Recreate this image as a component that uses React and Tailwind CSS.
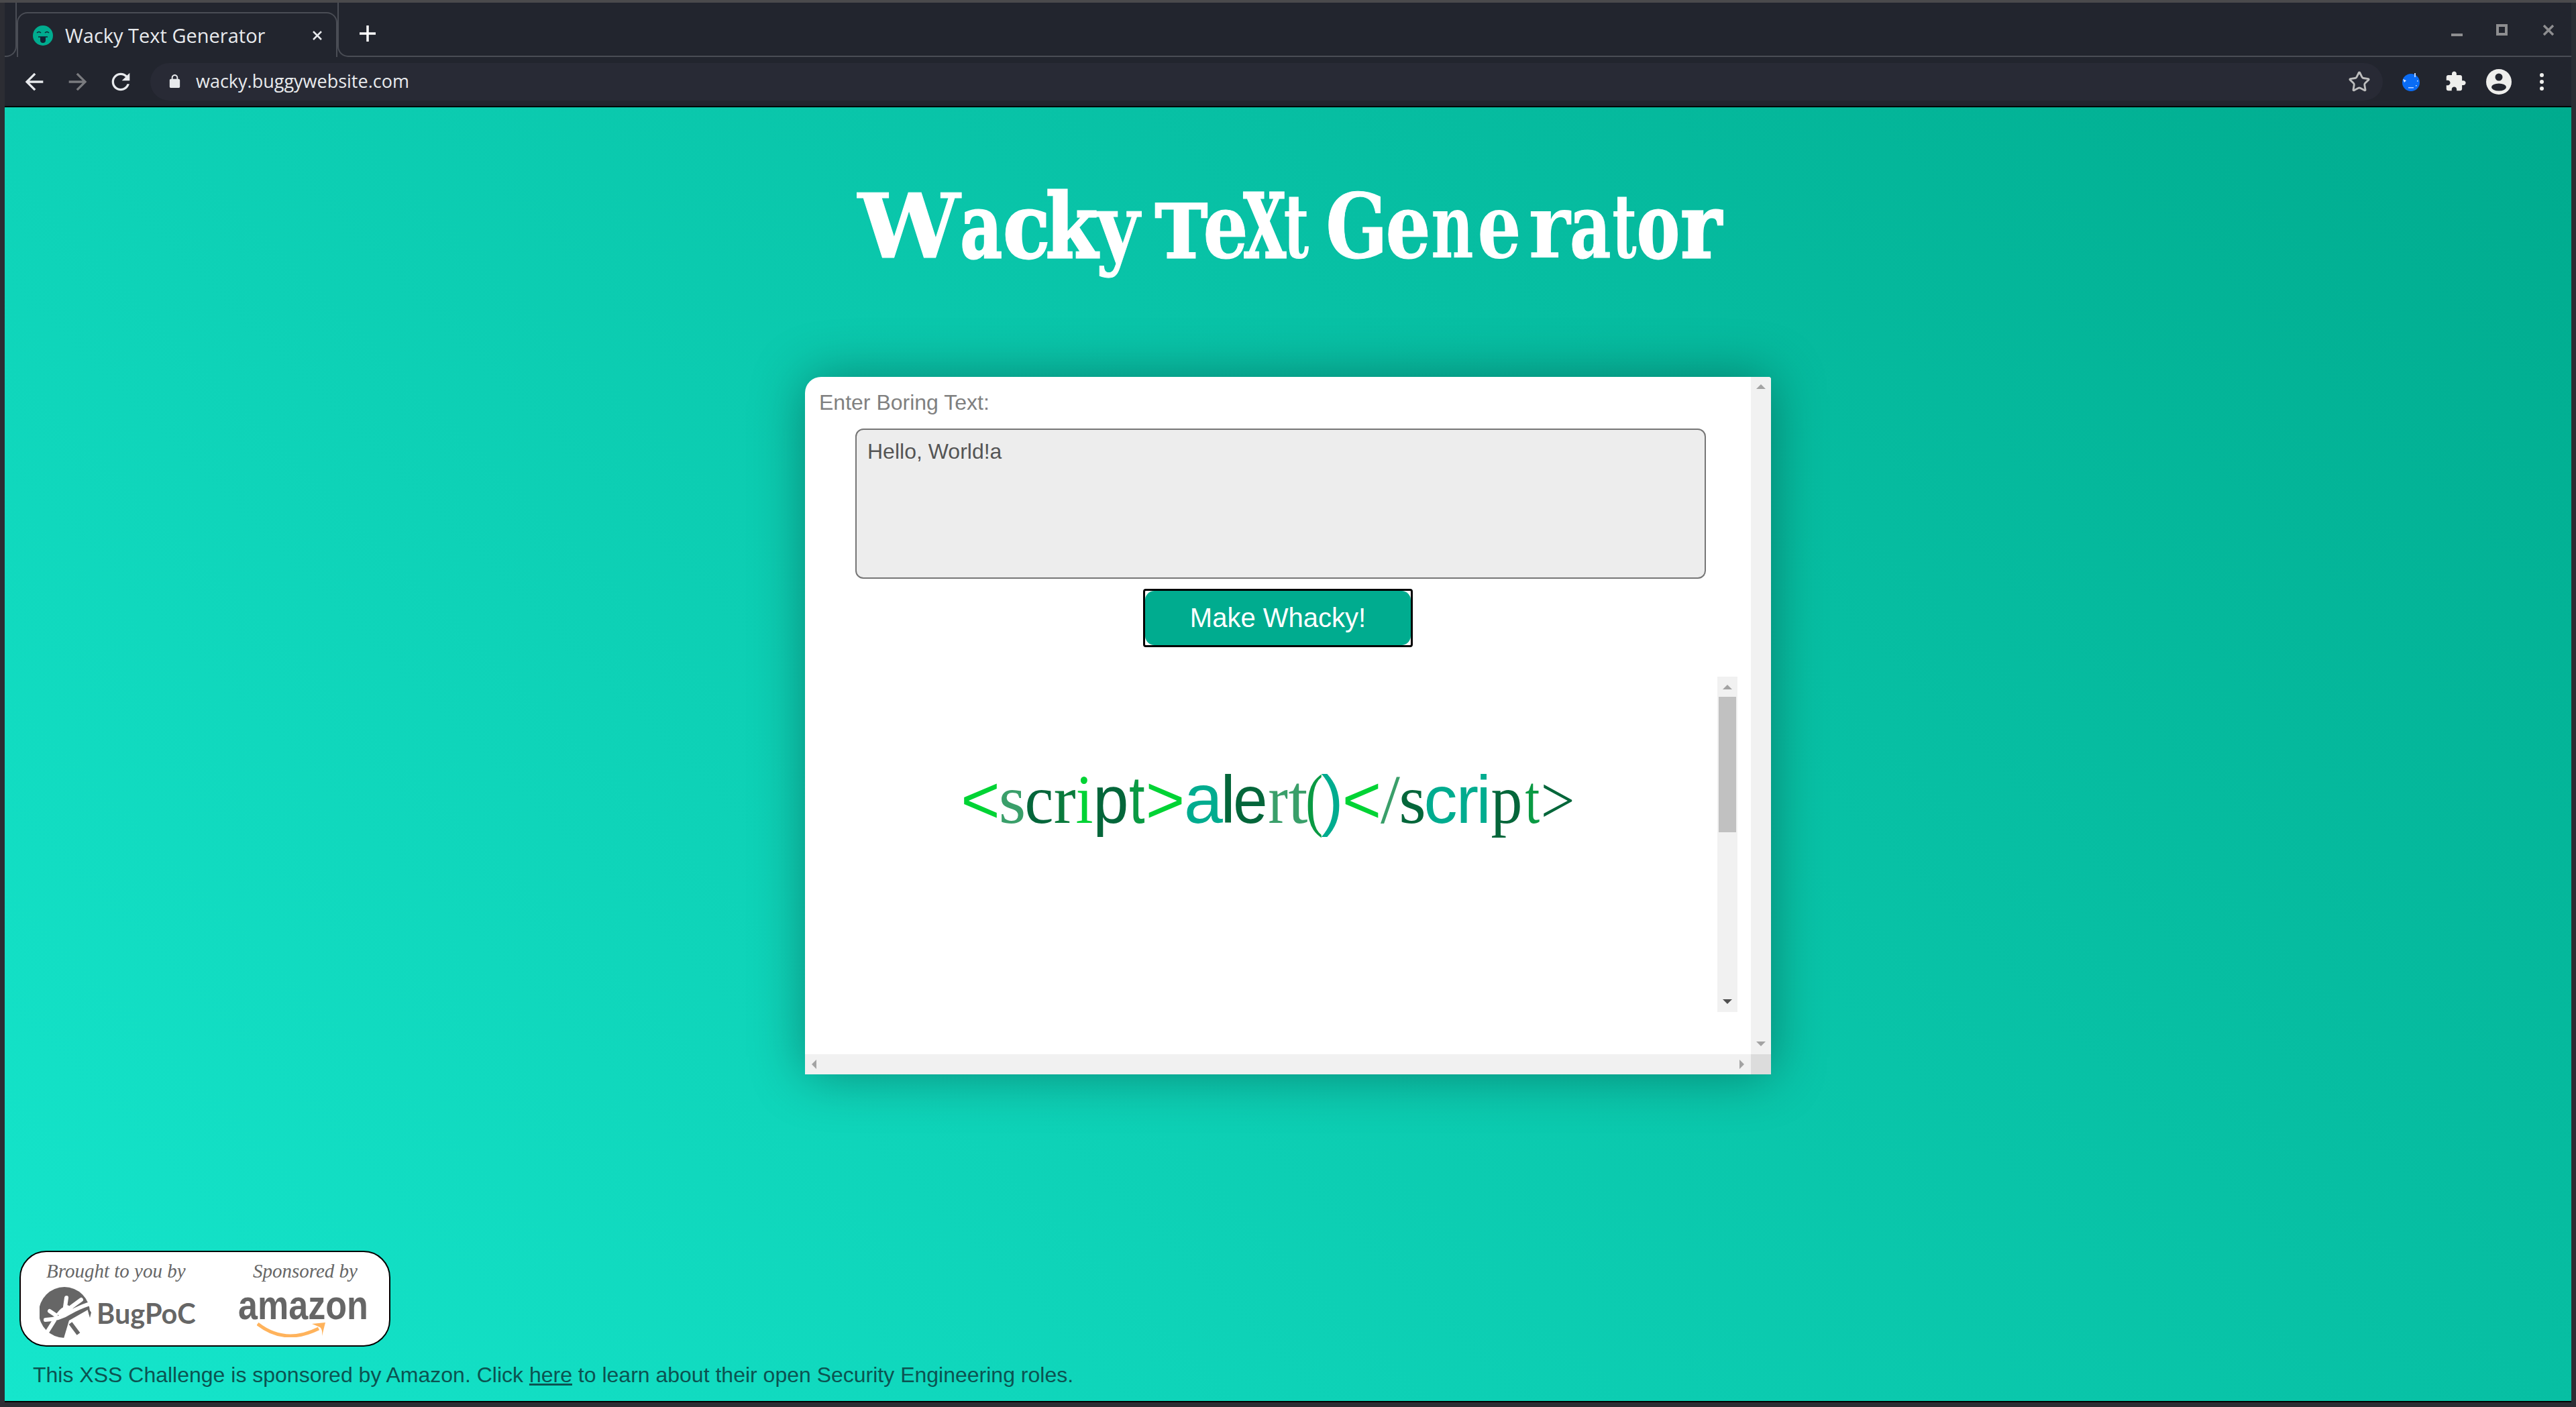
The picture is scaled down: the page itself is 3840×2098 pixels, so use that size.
import { Star } from "lucide-react";

const HEAVY = "[-webkit-text-stroke:3px_white]";
const MEDIUM = "[-webkit-text-stroke:1px_white]";

const TITLE = [
  { ch: "W", slot: "w-[152px]", cls: `text-[132px] scale-x-[1.03] ${MEDIUM}` },
  { ch: "a", slot: "ml-[4px] w-[56px]", cls: `text-[132px] scale-x-[0.73] ${HEAVY}` },
  { ch: "c", slot: "ml-[9px] w-[61px]", cls: `text-[132px] scale-x-[0.87] ${HEAVY}` },
  { ch: "k", slot: "w-[74px]", cls: `text-[132px] scale-x-[0.85] ${HEAVY}` },
  { ch: "y", slot: "ml-[-3px] w-[69px]", cls: `text-[132px] scale-x-[0.85] ${MEDIUM}` },
  { ch: "T", slot: "ml-[26px] w-[68px]", cls: `text-[110px] scale-x-[0.95] ${HEAVY}` },
  { ch: "e", slot: "ml-[2px] w-[59px]", cls: `text-[132px] scale-x-[0.8] ${MEDIUM}` },
  { ch: "X", slot: "w-[59px]", cls: `text-[132px] scale-x-[0.62] ${HEAVY}` },
  { ch: "t", slot: "w-[34px]", cls: "text-[132px] scale-x-[0.62]" },
  { ch: "G", slot: "ml-[32px] w-[83px]", cls: `text-[132px] scale-x-[0.82] ${MEDIUM}` },
  { ch: "e", slot: "ml-[4px] w-[61px]", cls: `text-[132px] scale-x-[0.8] ${MEDIUM}` },
  { ch: "n", slot: "ml-[7px] w-[58px]", cls: "text-[132px] scale-x-[0.66]" },
  { ch: "e", slot: "ml-[11px] w-[60px]", cls: "text-[132px] scale-x-[0.78]" },
  { ch: "r", slot: "ml-[18px] w-[54px]", cls: "text-[132px] scale-x-[0.9]" },
  { ch: "a", slot: "ml-[6px] w-[55px]", cls: `text-[132px] scale-x-[0.72] ${MEDIUM}` },
  { ch: "t", slot: "ml-[6px] w-[35px]", cls: "text-[132px] scale-x-[0.6]" },
  { ch: "o", slot: "w-[66px]", cls: `text-[132px] scale-x-[0.72] ${HEAVY}` },
  { ch: "r", slot: "w-[62px]", cls: `text-[132px] scale-x-[0.88] ${HEAVY}` },
];

const SERIF = "font-['Liberation_Serif',serif]";
const SANS = "font-['Liberation_Sans',sans-serif]";

const WACKY = [
  { ch: "<", slot: "w-[58px]", cls: `${SANS} text-[100px] text-[#00d334]` },
  { ch: "s", slot: "w-[37px]", cls: `${SERIF} text-[104px] text-[#3a9f6a]` },
  { ch: "c", slot: "w-[43px]", cls: `${SERIF} text-[104px] scale-x-[0.93] text-[#04663a]` },
  { ch: "r", slot: "w-[33px]", cls: `${SERIF} text-[104px] scale-x-[0.95] text-[#0a7a3c]` },
  { ch: "i", slot: "w-[26px]", cls: `${SERIF} text-[104px] scale-x-[0.9] text-[#00d334]` },
  { ch: "p", slot: "w-[52px]", cls: `${SANS} text-[100px] scale-x-[0.95] text-[#04663a]` },
  { ch: "t", slot: "w-[27px]", cls: `${SANS} text-[100px] scale-x-[0.85] text-[#0a9a43]` },
  { ch: ">", slot: "w-[57px]", cls: `${SANS} text-[100px] text-[#00d334]` },
  { ch: "a", slot: "w-[57px]", cls: `${SANS} text-[104px] text-[#00ac8f]` },
  { ch: "l", slot: "w-[16px]", cls: `${SANS} text-[100px] text-[#04663a]` },
  { ch: "e", slot: "w-[51px]", cls: `${SANS} text-[100px] scale-x-[0.92] text-[#04663a]` },
  { ch: "r", slot: "w-[31px]", cls: `${SERIF} text-[104px] scale-x-[0.85] text-[#3a9f6a]` },
  { ch: "t", slot: "w-[29px]", cls: `${SERIF} text-[104px] text-[#3a9f6a]` },
  { ch: "(", slot: "w-[20px]", cls: `${SERIF} text-[104px] scale-x-[0.75] text-[#0a9a43]` },
  { ch: ")", slot: "w-[33px]", cls: `${SANS} text-[100px] text-[#00ac8f]` },
  { ch: "<", slot: "w-[55px]", cls: `${SANS} text-[100px] text-[#00d334]` },
  { ch: "/", slot: "w-[30px]", cls: `${SERIF} text-[104px] text-[#3a9f6a]` },
  { ch: "s", slot: "w-[36px]", cls: `${SERIF} text-[104px] text-[#04663a]` },
  { ch: "c", slot: "w-[48px]", cls: `${SANS} text-[100px] text-[#00ac8f]` },
  { ch: "r", slot: "w-[32px]", cls: `${SANS} text-[100px] text-[#00ac8f]` },
  { ch: "i", slot: "w-[16px]", cls: `${SANS} text-[100px] text-[#00ac8f]` },
  { ch: "p", slot: "w-[52px]", cls: `${SERIF} text-[104px] scale-x-[0.9] text-[#04663a]` },
  { ch: "t", slot: "w-[26px]", cls: `${SERIF} text-[104px] scale-x-[0.75] text-[#0a9a43]` },
  { ch: ">", slot: "w-[49px]", cls: `${SERIF} text-[100px] scale-x-[0.9] text-[#04663a]` },
];

// chrome toolbar icons
const Icon = ({ d, size, color }) => (
  <svg width={size} height={size} viewBox="0 0 24 24" fill={color}>
    <path d={d} />
  </svg>
);

const Arrow = ({ dir, color = "#a3a3a3" }) => {
  const points = {
    up: "0,7 7,0 14,7",
    down: "0,0 14,0 7,7",
    left: "7,0 7,14 0,7",
    right: "0,0 7,7 0,14",
  };
  const vertical = dir === "up" || dir === "down";
  return (
    <svg width={vertical ? 14 : 7} height={vertical ? 7 : 14} fill={color}>
      <polygon points={points[dir]} />
    </svg>
  );
};

const Favicon = () => (
  <svg width="30" height="30" viewBox="0 0 30 30">
    <circle cx="15" cy="15" r="15" fill="#00ac8f" />
    <path d="M6 11q3-3 6 0M18 11q3-3 6 0" stroke="#123" strokeWidth="1.5" fill="none" />
    <path d="M8 17h14" stroke="#123" strokeWidth="1.5" />
    <path d="M11 17h8v5a4 4 0 0 1-8 0z" fill="#123" />
  </svg>
);

const Profile = () => (
  <svg width="38" height="38" viewBox="0 0 38 38">
    <circle cx="19" cy="19" r="19" fill="#eeeeec" />
    <circle cx="19" cy="12" r="5.5" fill="#22252e" />
    <ellipse cx="19" cy="27" rx="11" ry="5.5" fill="#22252e" />
  </svg>
);

const BlueExt = () => (
  <svg width="28" height="28" viewBox="0 0 28 28">
    <circle cx="14" cy="15" r="13" fill="#0a6cf5" />
    <path d="M2 10l5 2-3 3z" fill="#dbe8ff" />
    <path d="M19 1h2v6h-2zM10 22h8v1.500h-8z" fill="#b8d2ff" />
    <path d="M23 12h1.500v1.500H23zM21 19h1.500v1.500H21z" fill="#dbe8ff" />
  </svg>
);

const BugLogo = () => (
  <svg className="shrink-0" width="78" height="78" viewBox="0 0 78 78">
    <circle cx="37" cy="38" r="38" fill="#666666" />
    <path d="M35 80L44 50L72 34L75 46L82 80z" fill="#ffffff" />
    <path d="M75 46L70 28L77 38z" fill="#666666" />
    <path d="M9 49Q30 48 45 38Q60 30 72 26" stroke="#ffffff" strokeWidth="6" fill="none" strokeLinecap="round" />
    <path d="M25 40Q32 30 42 27L50 32L34 46z" fill="#ffffff" />
    <path d="M38 30L40 16M47 30L62 19M24 42L15 36M22 50L12 66" stroke="#ffffff" strokeWidth="6" fill="none" strokeLinecap="round" />
    <path d="M46 54L58 70" stroke="#666666" strokeWidth="6" />
  </svg>
);

const Smile = () => (
  <svg width="104" height="24" viewBox="0 0 104 24" fill="none">
    <path d="M1 4Q42 36 92 11" stroke="#ffb35c" strokeWidth="5" />
    <path d="M82 4L102 2L97 22Q98 12 94 9z" fill="#ffb35c" />
  </svg>
);

export default function App() {
  return (
    <div className="w-[3840px] h-[2098px] flex flex-col bg-[#2c2d33] border-t-4 border-[#4a4a4c] px-[7px] pb-[7px] font-['Liberation_Sans',sans-serif] overflow-hidden">
      {/* tabs */}
      <div className="h-[81px] flex shrink-0 bg-[#22252e] font-['Open_Sans',sans-serif]">
        <div className="w-[18px] border-b-2 border-r-2 border-[#4a4d55] rounded-br-[16px]" />
        <div className="w-[478px] mt-[14px] rounded-t-[16px] border-2 border-b-0 border-[#4a4d55] flex items-center pl-[22px]">
          <Favicon />
          <span className="ml-[18px] text-[29px] text-[#e8eaed] whitespace-nowrap">Wacky Text Generator</span>
          <svg className="ml-auto mr-[20px]" width="16" height="16" viewBox="0 0 16 16" stroke="#e8eaed" strokeWidth="2.5">
            <path d="M2 2L14 14M14 2L2 14" />
          </svg>
        </div>
        <div className="flex-1 flex items-center border-b-2 border-l-2 border-[#4a4d55] rounded-bl-[16px] pb-[2px]">
          <svg className="ml-[31px] mt-[15px]" width="24" height="24" viewBox="0 0 24 24" stroke="#ffffff" strokeWidth="3.5">
            <path d="M12 0V24M0 12H24" />
          </svg>
          <div className="ml-auto mt-[4px] flex items-center">
            <svg className="mt-[2px]" width="18" height="18" fill="#8e8e90"><rect x="1" y="13" width="17" height="4" /></svg>
            <svg className="ml-[50px]" width="18" height="18" fill="none" stroke="#8e8e90" strokeWidth="4"><rect x="2" y="2" width="13" height="13" /></svg>
            <svg className="ml-[51px] mr-[25px]" width="18" height="18" stroke="#8e8e90" strokeWidth="3.5"><path d="M2 2L16 16M16 2L2 16" /></svg>
          </div>
        </div>
      </div>

      {/* toolbar */}
      <div className="h-[73px] flex items-center shrink-0 bg-[#22252e] pl-[24px] font-['Open_Sans',sans-serif]">
        <Icon size={40} color="#e8eaed" d="M20 11H7.830l5.590-5.590L12 4l-8 8 8 8 1.410-1.410L7.830 13H20v-2z" />
        <div className="ml-[25px]">
          <Icon size={40} color="#7a7b7f" d="M12 4l-1.410 1.410L16.170 11H4v2h12.170l-5.580 5.590L12 20l8-8z" />
        </div>
        <div className="ml-[24px]">
          <Icon size={40} color="#e8eaed" d="M17.650 6.350C16.200 4.900 14.210 4 12 4c-4.420 0-7.990 3.580-7.990 8s3.570 8 7.990 8c3.730 0 6.840-2.550 7.730-6h-2.080c-.82 2.330-3.040 4-5.650 4-3.310 0-6-2.690-6-6s2.690-6 6-6c1.660 0 3.140.69 4.220 1.780L13 11h7V4l-2.350 2.350z" />
        </div>
        <div className="ml-[24px] w-[3328px] h-[56px] rounded-full bg-[#282a35] flex items-center pl-[25px] pr-[18px]">
          <Icon size={23} color="#e8eaed" d="M18 8h-1V6c0-2.760-2.240-5-5-5S7 3.240 7 6v2H6c-1.100 0-2 .9-2 2v10c0 1.100.9 2 2 2h12c1.100 0 2-.9 2-2V10c0-1.100-.9-2-2-2zM9 6c0-1.660 1.340-3 3-3s3 1.340 3 3v2H9V6z" />
          <span className="ml-[20px] text-[27px] text-[#e8eaed]">wacky.buggywebsite.com</span>
          <Star className="ml-auto" size={34} color="#bdbdbd" strokeWidth={2} />
        </div>
        <div className="ml-[28px]"><BlueExt /></div>
        <div className="ml-[36px]">
          <Icon size={33} color="#eeeeec" d="M20.500 11H19V7c0-1.100-.9-2-2-2h-4V3.500C13 2.120 11.880 1 10.500 1S8 2.120 8 3.500V5H4c-1.100 0-1.990.9-1.990 2v3.800H3.500c1.490 0 2.700 1.210 2.700 2.700s-1.210 2.700-2.700 2.700H2V20c0 1.100.9 2 2 2h3.800v-1.500c0-1.490 1.210-2.700 2.700-2.700 1.490 0 2.700 1.210 2.700 2.700V22H17c1.100 0 2-.9 2-2v-4h1.500c1.380 0 2.500-1.120 2.500-2.500S21.880 11 20.500 11z" />
        </div>
        <div className="ml-[29px]"><Profile /></div>
        <svg className="ml-[41px]" width="8" height="28" fill="#eeeeec">
          <circle cx="4" cy="4" r="3" />
          <circle cx="4" cy="14" r="3" />
          <circle cx="4" cy="24" r="3" />
        </svg>
      </div>

      {/* page */}
      <div className="flex-1 flex flex-col border-t-2 border-b-2 border-black bg-linear-[45deg,#15e6cc,#00ab8e]">
        <div className="h-[402px] flex justify-center items-baseline pt-[99px] pl-[6px] shrink-0 font-['DejaVu_Serif',serif] font-bold text-white leading-[1.2]">
          {TITLE.map((l, i) => (
            <div key={i} className={`${l.slot} flex justify-center items-baseline`}>
              <span className={`inline-block ${l.cls}`}>{l.ch}</span>
            </div>
          ))}
        </div>

        <div className="w-[1440px] h-[1040px] self-center flex flex-col bg-white rounded-tl-[24px] rounded-tr-[4px] overflow-hidden shrink-0 shadow-[0_0_80px_rgba(0,0,0,0.35)]">
          <div className="flex-1 flex min-h-0">
            <div className="flex-1 flex flex-col min-w-0">
              <div className="pl-[21px] pt-[20px] text-[32px] leading-[37px] text-[#808080]">Enter Boring Text:</div>
              <div className="ml-[75px] mt-[20px] w-[1268px] h-[224px] rounded-[12px] border-2 border-[#767676] bg-[#ededed] px-[16px] py-[14px] text-[32px] leading-[37px] text-[#555555]">Hello, World!a</div>
              <button className="self-center mt-[15px] w-[402px] h-[87px] rounded-[4px] border-[3px] border-black bg-white p-0">
                <span className="w-full h-full flex items-center justify-center rounded-[14px] bg-[#00ac8f] pb-[2px] text-[40px] text-white">Make Whacky!</span>
              </button>
              <div className="ml-[75px] mt-[44px] w-[1315px] h-[500px] flex">
                <div className="flex-1 flex justify-center items-baseline pt-[120px] pr-[56px] leading-[1.2]">
                  {WACKY.map((l, i) => (
                    <div key={i} className={`${l.slot} flex justify-center items-baseline`}>
                      <span className={`inline-block ${l.cls}`}>{l.ch}</span>
                    </div>
                  ))}
                </div>
                <div className="w-[30px] h-full bg-[#f1f1f1] flex flex-col items-center">
                  <div className="h-[30px] flex items-center justify-center"><Arrow dir="up" /></div>
                  <div className="w-[26px] h-[202px] bg-[#c1c1c1]" />
                  <div className="mt-auto h-[32px] flex items-center justify-center"><Arrow dir="down" color="#505050" /></div>
                </div>
              </div>
            </div>
            <div className="w-[30px] bg-[#f1f1f1] flex flex-col items-center justify-between pt-[11px] pb-[12px]">
              <Arrow dir="up" />
              <Arrow dir="down" />
            </div>
          </div>
          <div className="h-[30px] flex shrink-0">
            <div className="flex-1 bg-[#f1f1f1] flex items-center justify-between pl-[10px] pr-[10px]">
              <Arrow dir="left" />
              <Arrow dir="right" />
            </div>
            <div className="w-[30px] bg-[#dcdcdc]" />
          </div>
        </div>

        <div className="mt-auto ml-[22px] w-[553px] h-[143px] rounded-[40px] border-2 border-black bg-white flex shrink-0 text-[#666666]">
          <div className="w-[320px] shrink-0 flex flex-col pl-[28px]">
            <span className="mt-[12px] ml-[10px] font-['Liberation_Serif',serif] italic text-[29px] leading-[32px] whitespace-nowrap">Brought to you by</span>
            <div className="mt-[8px] flex items-center">
              <BugLogo />
              <span className="ml-[7px] font-['Lato',sans-serif] font-bold text-[41.5px]">BugPoC</span>
            </div>
          </div>
          <div className="w-[229px] flex flex-col items-start">
            <span className="mt-[12px] ml-[26px] font-['Liberation_Serif',serif] italic text-[29px] leading-[32px] whitespace-nowrap">Sponsored by</span>
            <span className="ml-[4px] inline-block origin-left scale-x-[0.84] mt-[7px] font-['Liberation_Sans',sans-serif] font-bold text-[62px] leading-[56px]">amazon</span>
            <div className="ml-[32px] mt-[-4px]"><Smile /></div>
          </div>
        </div>

        <p className="ml-[42px] mt-[24px] mb-[20px] text-[32px] leading-[37px] text-[#0b5351]">
          This XSS Challenge is sponsored by Amazon. Click <a className="underline" href="#">here</a> to learn about their open Security Engineering roles.
        </p>
      </div>
    </div>
  );
}
